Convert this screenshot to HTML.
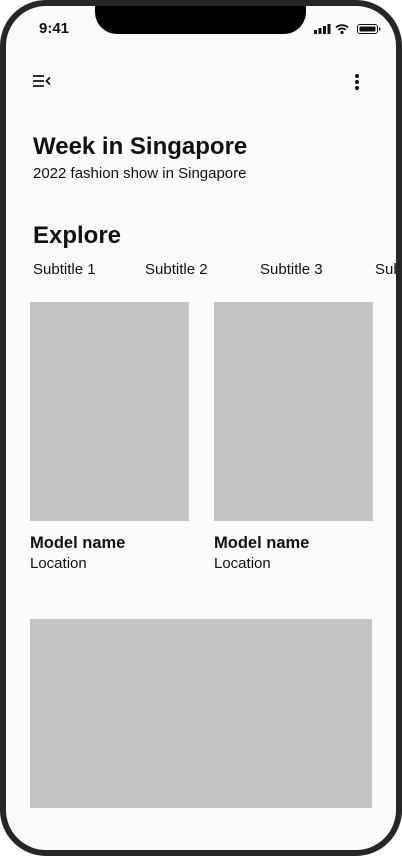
<!DOCTYPE html>
<html><head><style>
*{margin:0;padding:0;box-sizing:border-box}
body{width:402px;height:856px;background:#fff;position:relative;overflow:hidden;font-family:"Liberation Sans",sans-serif;color:#111}
.frame{position:absolute;left:0;top:0;width:402px;height:856px;border:6px solid #262626;border-radius:46px;background:#fbfbfb;overflow:hidden}
.a{position:absolute;white-space:nowrap}
.g{position:absolute;background:#c4c4c4}
</style></head><body>
<div class="frame">
<div class="a" style="left:89px;top:0;width:211px;height:28px;background:#000;border-radius:0 0 22px 22px"></div>
<div class="a" style="left:33px;top:14px;font-size:15px;font-weight:bold">9:41</div>
<svg class="a" style="left:308px;top:17px" width="72" height="12" viewBox="0 0 72 12">
<rect x="0" y="7" width="3" height="4" fill="#111"/><rect x="4.5" y="5" width="3" height="6" fill="#111"/><rect x="9" y="3" width="3" height="8" fill="#111"/><rect x="13.5" y="1" width="3" height="10" fill="#111"/>
<path d="M22 4.5a9 9 0 0 1 12 0M24.2 6.8a6 6 0 0 1 7.6 0" stroke="#111" stroke-width="1.8" fill="none"/><circle cx="28" cy="9.5" r="1.6" fill="#111"/>
<rect x="43.5" y="1.5" width="20" height="9" rx="2.5" stroke="#111" fill="none"/><rect x="45.5" y="3.5" width="16" height="5" rx="1" fill="#111"/><rect x="65" y="4.5" width="1.3" height="3" fill="#111"/>
</svg>
<svg class="a" style="left:27px;top:68px" width="20" height="14" viewBox="0 0 20 14">
<path d="M0 2h11M0 7h11M0 12h11" stroke="#111" stroke-width="1.8"/><path d="M17 3.5l-3.5 3.5 3.5 3.5" stroke="#111" stroke-width="1.8" fill="none"/>
</svg>
<svg class="a" style="left:348px;top:67px" width="6" height="18"><circle cx="3" cy="3" r="2" fill="#111"/><circle cx="3" cy="9" r="2" fill="#111"/><circle cx="3" cy="15" r="2" fill="#111"/></svg>
<div class="a" style="left:27px;top:127px;font-size:24px;font-weight:bold">Week in Singapore</div>
<div class="a" style="left:27px;top:159px;font-size:15px">2022 fashion show in Singapore</div>
<div class="a" style="left:27px;top:216px;font-size:24px;font-weight:bold">Explore</div>
<div class="a" style="left:27px;top:255px;font-size:15px">Subtitle 1</div>
<div class="a" style="left:139px;top:255px;font-size:15px">Subtitle 2</div>
<div class="a" style="left:254px;top:255px;font-size:15px">Subtitle 3</div>
<div class="a" style="left:369px;top:255px;font-size:15px">Subtitle 4</div>
<div class="g" style="left:24px;top:296px;width:159px;height:219px"></div>
<div class="g" style="left:208px;top:296px;width:159px;height:219px"></div>
<div class="a" style="left:24px;top:528px;font-size:16.5px;font-weight:bold">Model name</div>
<div class="a" style="left:24px;top:549px;font-size:15px">Location</div>
<div class="a" style="left:208px;top:528px;font-size:16.5px;font-weight:bold">Model name</div>
<div class="a" style="left:208px;top:549px;font-size:15px">Location</div>
<div class="g" style="left:24px;top:613px;width:342px;height:189px"></div>
</div>
</body></html>
